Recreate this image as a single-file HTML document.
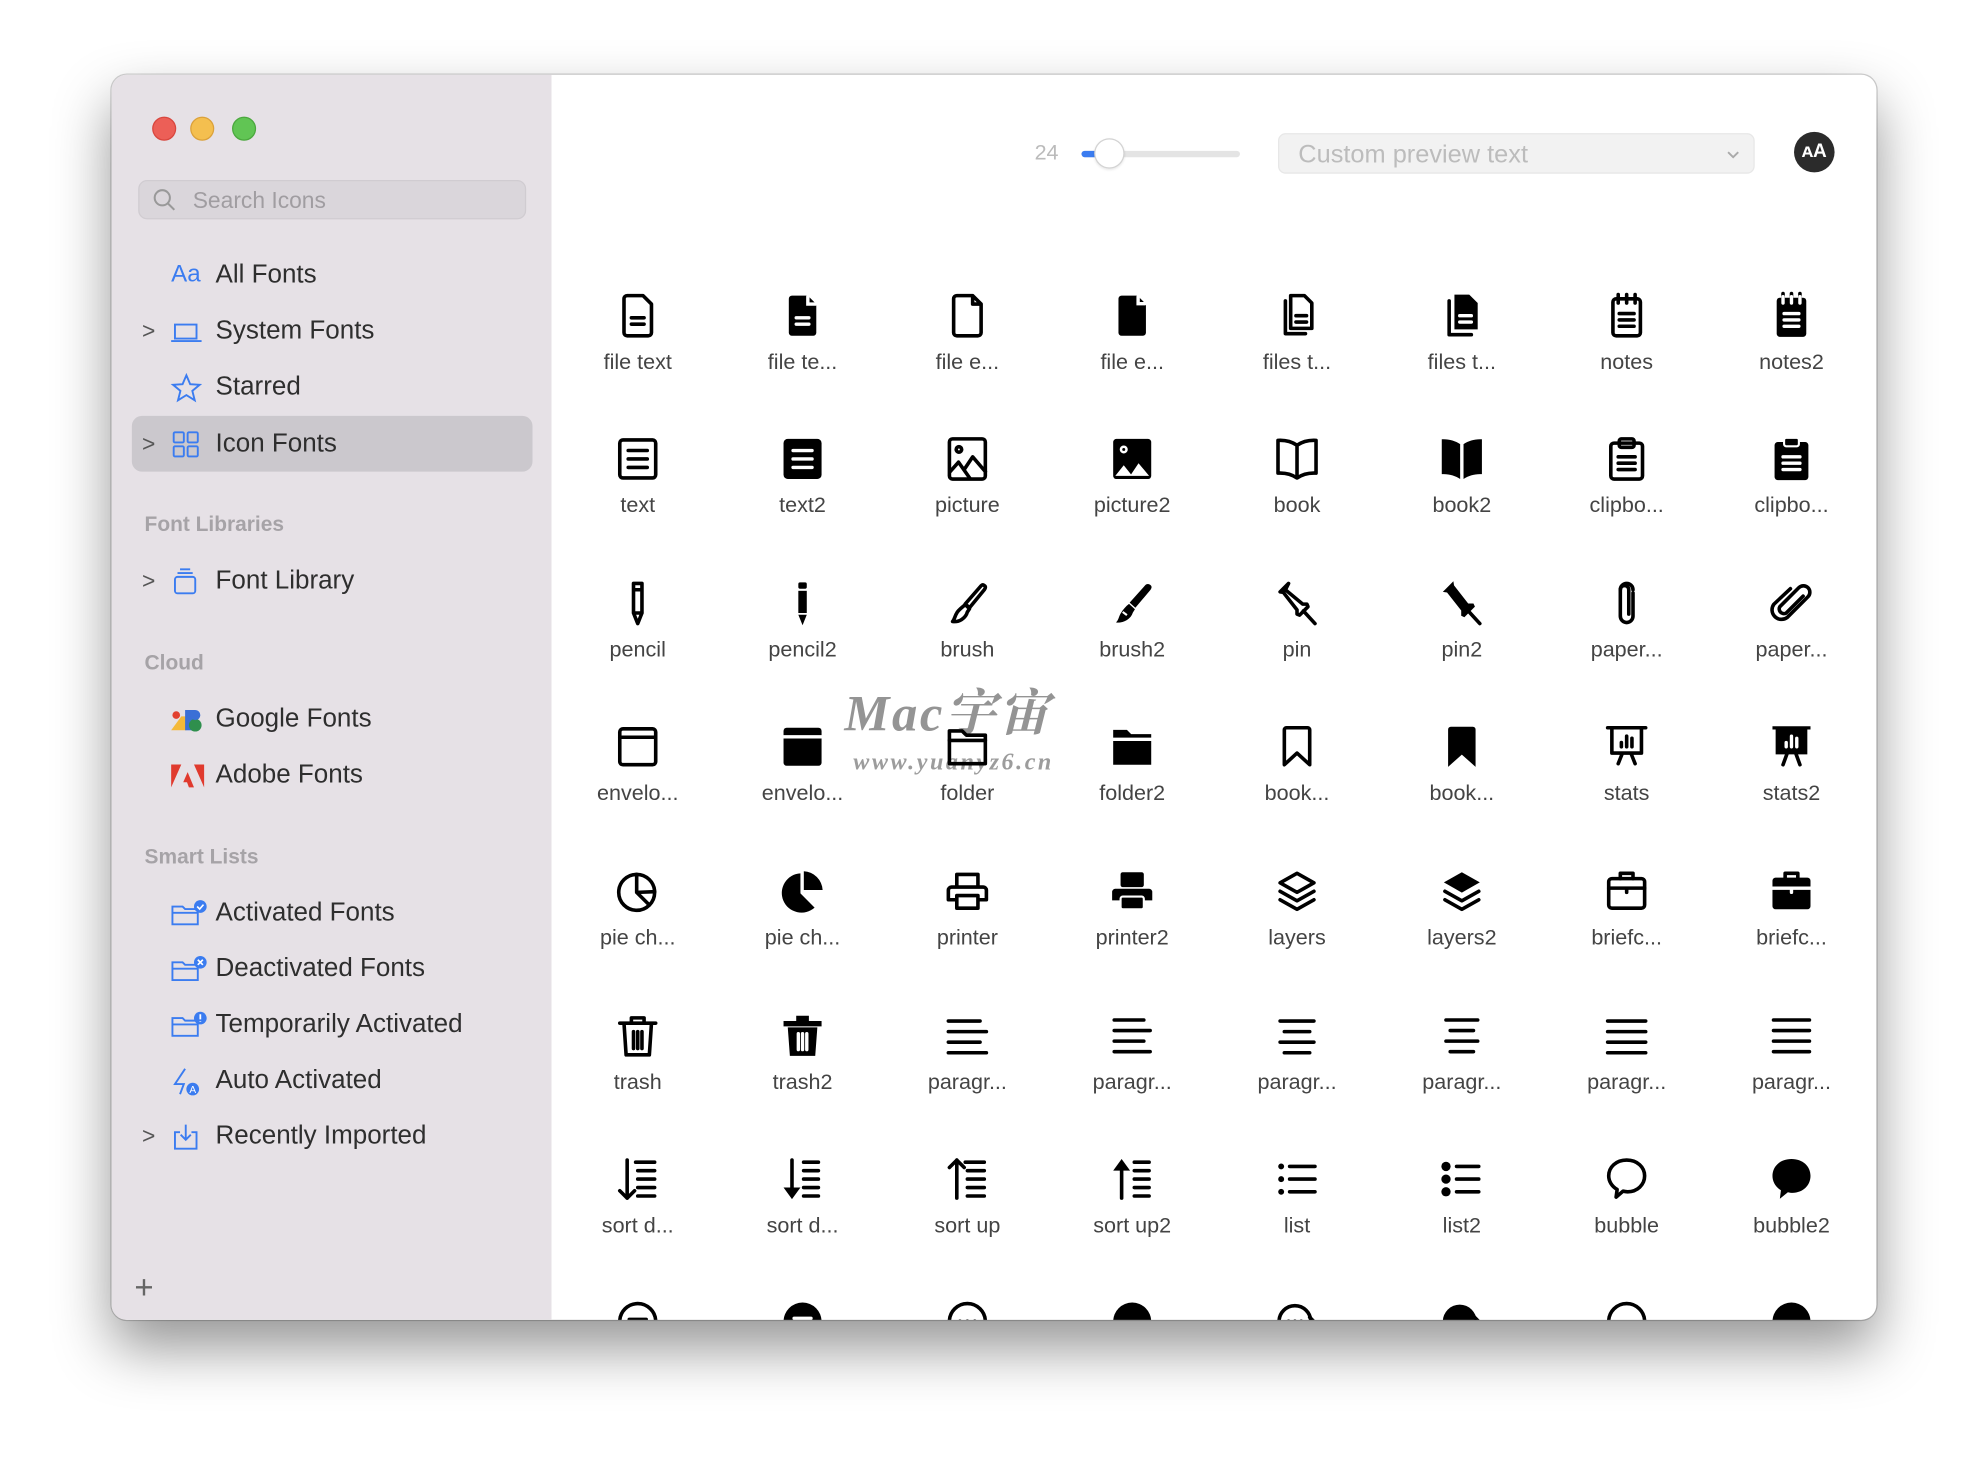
<!DOCTYPE html>
<html><head><meta charset="utf-8"><style>
*{margin:0;padding:0;box-sizing:border-box}
html,body{width:1988px;height:1468px;overflow:hidden;background:#fff;font-family:"Liberation Sans","Noto Sans CJK SC",sans-serif}
#w{position:absolute;left:0;top:0;width:1568px;height:1158px;transform:scale(1.267857);transform-origin:0 0}
.win{position:absolute;left:88px;top:59px;width:1392px;height:982px;border-radius:12px;overflow:hidden;background:#fff;box-shadow:0 22px 45px rgba(0,0,0,.42),0 0 0 1px rgba(0,0,0,.18)}
.side{position:absolute;left:0;top:0;width:347px;height:982px;background:#e6e1e6}
.dot{position:absolute;top:33px;width:19px;height:19px;border-radius:50%}
.search{position:absolute;left:21px;top:83px;width:306px;height:31px;border-radius:7px;background:#dad6db;border:1px solid #d0ccd1}
.search span{position:absolute;left:42px;top:5px;font-size:18px;color:#a09da1}
.it{position:absolute;left:0;font-size:20.5px;color:#2e2e2e;height:24px;line-height:24px}
.it .t{position:absolute;left:82px;white-space:nowrap}
.it .ch{position:absolute;left:24px;top:0;font-size:18px;color:#555}
.it svg{position:absolute;left:46px;top:1px}
.hd{position:absolute;left:26px;font-size:16.5px;font-weight:bold;color:#a6a3a7}
.cell{position:absolute;width:120px;text-align:center}
.cell svg{display:block;margin:0 auto;width:40px;height:40px}
.cell div{margin-top:7px;font-size:17px;line-height:20px;color:#444}
.o{fill:none;stroke:#000;stroke-width:1.7;stroke-linejoin:round;stroke-linecap:round}
.f{fill:#000}
.wl{fill:none;stroke:#fff;stroke-width:1.6;stroke-linecap:round}
</style></head><body><div id="w">
<div class="win">
<div class="side">
<div class="dot" style="left:32px;background:#ec5f57;border:1px solid #d8463e"></div>
<div class="dot" style="left:62px;background:#f4bf4f;border:1px solid #dba13a"></div>
<div class="dot" style="left:95px;background:#61c554;border:1px solid #4ba83e"></div>
<div class="search"><svg style="position:absolute;left:10px;top:5px" width="20" height="20" viewBox="0 0 20 20"><circle cx="8" cy="8" r="6" fill="none" stroke="#999" stroke-width="1.6"/><path d="M12.5 12.5l5 5" stroke="#999" stroke-width="1.6"/></svg><span>Search Icons</span></div>

<div class="it" style="top:146px"><span style="position:absolute;left:47px;color:#3b7cf0;font-size:19px">Aa</span><span class="t">All Fonts</span></div>
<div class="it" style="top:190px"><span class="ch">&gt;</span><svg width="26" height="24" viewBox="0 0 26 24"><path d="M4 6h17v11H4zM1 19h24" fill="none" stroke="#3b7cf0" stroke-width="1.5"/></svg><span class="t">System Fonts</span></div>
<div class="it" style="top:234px"><svg width="26" height="24" viewBox="0 0 26 24"><path d="M13 2l3 7 7.5.5-5.8 4.8 1.9 7.4L13 17.6l-6.6 4.1 1.9-7.4L2.5 9.5 10 9z" fill="none" stroke="#3b7cf0" stroke-width="1.5"/></svg><span class="t">Starred</span></div>
<div style="position:absolute;left:16px;top:269px;width:316px;height:44px;border-radius:8px;background:#cbc8cd"></div>
<div class="it" style="top:279px"><span class="ch">&gt;</span><svg width="26" height="24" viewBox="0 0 26 24"><g fill="none" stroke="#3b7cf0" stroke-width="1.5"><rect x="3" y="2" width="8" height="8" rx="1"/><rect x="14" y="2" width="8" height="8" rx="1"/><rect x="3" y="13" width="8" height="8" rx="1"/><rect x="14" y="13" width="8" height="8" rx="1"/></g></svg><span class="t">Icon Fonts</span></div>

<div class="hd" style="top:346px">Font Libraries</div>
<div class="it" style="top:387px"><span class="ch">&gt;</span><svg width="26" height="24" viewBox="0 0 26 24"><g fill="none" stroke="#3b7cf0" stroke-width="1.5"><rect x="4" y="8" width="16" height="13" rx="2"/><path d="M6 5h12M8 2h8"/></g></svg><span class="t">Font Library</span></div>

<div class="hd" style="top:455px">Cloud</div>
<div class="it" style="top:496px"><svg width="28" height="24" viewBox="0 0 28 24"><path d="M1 20l8-11h4v11z" fill="#f4b93a"/><circle cx="5" cy="8" r="3" fill="#e2402f"/><rect x="12" y="4" width="8" height="16" fill="#3b6fd6"/><circle cx="20" cy="16" r="5" fill="#2f8f4d"/><circle cx="20" cy="8" r="4" fill="#3b6fd6"/></svg><span class="t">Google Fonts</span></div>
<div class="it" style="top:540px"><svg width="28" height="24" viewBox="0 0 28 24"><path d="M1 3h8L1 21zM19 3h8v18zM14 9l5 12h-4l-1.5-4h-3z" fill="#e03a2e"/></svg><span class="t">Adobe Fonts</span></div>

<div class="hd" style="top:608px">Smart Lists</div>
<div class="it" style="top:649px"><svg width="30" height="24" viewBox="0 0 30 24"><path d="M2 6h8l2 2h10v12H2z" fill="none" stroke="#3b7cf0" stroke-width="1.5"/><path d="M2 11h20" stroke="#3b7cf0" stroke-width="1.5"/><circle cx="24" cy="6" r="5" fill="#3b7cf0"/><path d="M21.5 6l2 2 3-3.5" fill="none" stroke="#fff" stroke-width="1.3"/></svg><span class="t">Activated Fonts</span></div>
<div class="it" style="top:693px"><svg width="30" height="24" viewBox="0 0 30 24"><path d="M2 6h8l2 2h10v12H2z" fill="none" stroke="#3b7cf0" stroke-width="1.5"/><path d="M2 11h20" stroke="#3b7cf0" stroke-width="1.5"/><circle cx="24" cy="6" r="5" fill="#3b7cf0"/><path d="M22 4l4 4M26 4l-4 4" stroke="#fff" stroke-width="1.3"/></svg><span class="t">Deactivated Fonts</span></div>
<div class="it" style="top:737px"><svg width="30" height="24" viewBox="0 0 30 24"><path d="M2 6h8l2 2h10v12H2z" fill="none" stroke="#3b7cf0" stroke-width="1.5"/><path d="M2 11h20" stroke="#3b7cf0" stroke-width="1.5"/><circle cx="24" cy="6" r="5" fill="#3b7cf0"/><path d="M24 3v4M24 8.5v.5" stroke="#fff" stroke-width="1.4"/></svg><span class="t">Temporarily Activated</span></div>
<div class="it" style="top:781px"><svg width="30" height="24" viewBox="0 0 30 24"><path d="M12 2L4 14h7l-3 8" fill="none" stroke="#3b7cf0" stroke-width="1.5"/><circle cx="18" cy="18" r="5" fill="#3b7cf0"/><text x="18" y="21" font-size="8" fill="#fff" text-anchor="middle" font-family="Liberation Sans">A</text></svg><span class="t">Auto Activated</span></div>
<div class="it" style="top:825px"><span class="ch">&gt;</span><svg width="26" height="24" viewBox="0 0 26 24"><path d="M8 8H4v13h17V8h-4M12.5 2v12M8.5 10l4 4 4-4" fill="none" stroke="#3b7cf0" stroke-width="1.5"/></svg><span class="t">Recently Imported</span></div>
<div style="position:absolute;left:18px;top:941px;font-size:26px;color:#666;font-weight:300">+</div>
</div>

<!-- toolbar -->
<div style="position:absolute;left:728px;top:52px;font-size:17px;color:#bbb">24</div>
<div style="position:absolute;left:765px;top:60px;width:125px;height:5px;border-radius:3px;background:#e4e4e4"></div>
<div style="position:absolute;left:765px;top:60px;width:14px;height:5px;border-radius:3px;background:#3b7cf0"></div>
<div style="position:absolute;left:775px;top:50px;width:24px;height:24px;border-radius:50%;background:#fff;border:1px solid #d3d3d3;box-shadow:0 1px 2px rgba(0,0,0,.1)"></div>
<div style="position:absolute;left:920px;top:46px;width:376px;height:32px;border-radius:6px;background:#f2f2f2;border:1px solid #e7e7e7"><span style="position:absolute;left:15px;top:5px;font-size:20px;color:#bcbcbc">Custom preview text</span><svg style="position:absolute;right:10px;top:11px" width="12" height="10" viewBox="0 0 12 10"><path d="M2 3l4 4 4-4" fill="none" stroke="#aaa" stroke-width="1.5"/></svg></div>
<div style="position:absolute;left:1327px;top:45px;width:32px;height:32px;border-radius:50%;background:#2b2b2b;color:#fff;font-size:15px;font-weight:bold;text-align:center;line-height:32px">ᴀA</div>

<!-- watermark -->
<div style="position:absolute;left:578px;top:472px;font-size:40px;font-style:italic;font-weight:bold;color:rgba(90,90,90,.65);font-family:'Liberation Serif','Noto Serif CJK SC',serif;letter-spacing:2px">Mac宇宙</div>
<div style="position:absolute;left:585px;top:532px;font-size:19px;font-style:italic;font-weight:bold;color:rgba(90,90,90,.6);font-family:'Liberation Serif',serif;letter-spacing:2px">www.yuanyz6.cn</div>
</div>

<!-- grid (page coords) -->
<div style="position:absolute;left:0;top:0;width:1568px;height:1041px;overflow:hidden">
<div class="cell" style="left:443px;top:229px"><svg viewBox="0 0 24 24"><path class="o" d="M7 2.5h7.5l4 4V20a1.5 1.5 0 0 1-1.5 1.5H7A1.5 1.5 0 0 1 5.5 20V4A1.5 1.5 0 0 1 7 2.5z"/><path class="o" d="M9 13h6M9 16h6"/></svg><div>file text</div></div>
<div class="cell" style="left:573px;top:229px"><svg viewBox="0 0 24 24"><path class="f" d="M7 2.5h7.5l4 4V20a1.5 1.5 0 0 1-1.5 1.5H7A1.5 1.5 0 0 1 5.5 20V4A1.5 1.5 0 0 1 7 2.5z"/><path class="wl" d="M9 13h6M9 16h6M14.5 3v3.5H18"/></svg><div>file te...</div></div>
<div class="cell" style="left:703px;top:229px"><svg viewBox="0 0 24 24"><path class="o" d="M7 2.5h7.5l4 4V20a1.5 1.5 0 0 1-1.5 1.5H7A1.5 1.5 0 0 1 5.5 20V4A1.5 1.5 0 0 1 7 2.5zM14.5 2.5v4h4"/></svg><div>file e...</div></div>
<div class="cell" style="left:833px;top:229px"><svg viewBox="0 0 24 24"><path class="f" d="M7 2.5h7.5l4 4V20a1.5 1.5 0 0 1-1.5 1.5H7A1.5 1.5 0 0 1 5.5 20V4A1.5 1.5 0 0 1 7 2.5z"/><path class="wl" d="M14.8 3v3.3H18"/></svg><div>file e...</div></div>
<div class="cell" style="left:963px;top:229px"><svg viewBox="0 0 24 24"><path class="o" d="M9 2.5h6.5l3.5 3.5v12H9zM6.5 5v15.5H16"/><path class="o" d="M11.5 12h5M11.5 15h5"/></svg><div>files t...</div></div>
<div class="cell" style="left:1093px;top:229px"><svg viewBox="0 0 24 24"><path class="f" d="M8.5 2h7l4 4v12.5h-11z"/><path class="o" d="M6 5v16h10.5"/><path class="wl" d="M11 12h5.5M11 15h5.5"/></svg><div>files t...</div></div>
<div class="cell" style="left:1223px;top:229px"><svg viewBox="0 0 24 24"><rect class="o" x="5.5" y="4" width="13" height="17.5" rx="1.5"/><path class="o" d="M8 2v4M12 2v4M16 2v4M8.5 11h7M8.5 14h7M8.5 17h7"/></svg><div>notes</div></div>
<div class="cell" style="left:1353px;top:229px"><svg viewBox="0 0 24 24"><rect class="f" x="5" y="3.5" width="14" height="18.5" rx="1.5"/><path class="o" d="M8 1.5v3M12 1.5v3M16 1.5v3"/><path class="wl" d="M8 3v3M12 3v3M16 3v3M8.5 11h7M8.5 14h7M8.5 17h7"/></svg><div>notes2</div></div>
<div class="cell" style="left:443px;top:342px"><svg viewBox="0 0 24 24"><rect class="o" x="3.5" y="3" width="17" height="18" rx="1.5"/><path class="o" d="M7.5 8h9M7.5 12h9M7.5 16h9" stroke-width="1.9"/></svg><div>text</div></div>
<div class="cell" style="left:573px;top:342px"><svg viewBox="0 0 24 24"><rect class="f" x="3" y="2.5" width="18" height="19" rx="2"/><path class="wl" d="M7.5 8h9M7.5 12h9M7.5 16h9"/></svg><div>text2</div></div>
<div class="cell" style="left:703px;top:342px"><svg viewBox="0 0 24 24"><rect class="o" x="3.5" y="2.5" width="17" height="19" rx="1.5"/><circle class="o" cx="8" cy="7.5" r="1.3"/><path class="o" d="M3.8 18l4-4.5 5.5 7.8M10.5 17l4-6 6 7"/></svg><div>picture</div></div>
<div class="cell" style="left:833px;top:342px"><svg viewBox="0 0 24 24"><rect class="f" x="3" y="2.5" width="18" height="19" rx="1.5"/><circle cx="8" cy="7.5" r="1.3" fill="none" stroke="#fff" stroke-width="1.2"/><path d="M4 20l4-5 4 5zM11 20l4-6 5 6z" fill="#fff"/></svg><div>picture2</div></div>
<div class="cell" style="left:963px;top:342px"><svg viewBox="0 0 24 24"><path class="o" d="M12 5.5C9.5 3.8 6.5 3 3 3.2v15.5c3.5-.2 6.5.6 9 2.3 2.5-1.7 5.5-2.5 9-2.3V3.2c-3.5-.2-6.5.6-9 2.3zM12 5.5V21"/></svg><div>book</div></div>
<div class="cell" style="left:1093px;top:342px"><svg viewBox="0 0 24 24"><path class="f" d="M11.2 5C8.7 3.3 5.7 2.5 2.5 2.7v16.5c3.2-.2 6.2.6 8.7 2.3zM12.8 5c2.5-1.7 5.5-2.5 8.7-2.3v16.5c-3.2-.2-6.2.6-8.7 2.3z"/></svg><div>book2</div></div>
<div class="cell" style="left:1223px;top:342px"><svg viewBox="0 0 24 24"><rect class="o" x="4.5" y="4.5" width="15" height="17" rx="1.5"/><rect class="o" x="8.5" y="2.5" width="7" height="4" rx="1"/><path class="o" d="M8 11h8M8 14h8M8 17h8"/></svg><div>clipbo...</div></div>
<div class="cell" style="left:1353px;top:342px"><svg viewBox="0 0 24 24"><rect class="f" x="4" y="4" width="16" height="18" rx="1.5"/><rect class="f" x="8.5" y="2" width="7" height="4" rx="1" stroke="#fff" stroke-width="1"/><path class="wl" d="M8 11h8M8 14h8M8 17h8"/></svg><div>clipbo...</div></div>
<div class="cell" style="left:443px;top:456px"><svg viewBox="0 0 24 24"><path class="o" d="M10 2.5h4v14h-4zM10 5.5h4M10 16.5l2 5 2-5"/></svg><div>pencil</div></div>
<div class="cell" style="left:573px;top:456px"><svg viewBox="0 0 24 24"><rect class="f" x="10" y="2" width="4" height="3" rx=".8"/><rect class="f" x="10" y="6" width="4" height="10.5"/><path class="f" d="M10 17.3h4l-2 5z"/></svg><div>pencil2</div></div>
<div class="cell" style="left:703px;top:456px"><svg viewBox="0 0 24 24"><path class="o" d="M20 3.5c.8.5.6 1.2 0 2L13 14l-2-1.8 7.5-8.6c.6-.6 1-.6 1.5-.1z"/><path class="o" d="M11 12.5l2 2-1 1.5c-.8 3-4 5-7 4.5 1-1 1-2.5 2-4 .8-1.5 2.4-2.5 4-4z"/></svg><div>brush</div></div>
<div class="cell" style="left:833px;top:456px"><svg viewBox="0 0 24 24"><path class="f" d="M20.8 3.4c.6.6.4 1.4-.2 2.2L13.5 14 10.8 11.6 18.2 3.3c.8-.8 1.8-.7 2.6.1z"/><path class="f" d="M10.5 12.2l2.8 2.5-1 1.6c-1 3.2-4.5 5-8 4.7 1.3-1.2 1.3-2.8 2.3-4.4 1-1.6 2.3-3.2 3.9-4.4z"/><path d="M7.5 16l2 1.5" stroke="#fff" stroke-width="1"/></svg><div>brush2</div></div>
<div class="cell" style="left:963px;top:456px"><svg viewBox="0 0 24 24"><path class="o" d="M8 2.5l-4 4 1.5.2 6.5 8.3v2l1.2 .5 4-4-.5-1.2h-2L6.5 5.5z"/><path class="o" d="M15 15.5l5.5 6"/></svg><div>pin</div></div>
<div class="cell" style="left:1093px;top:456px"><svg viewBox="0 0 24 24"><path class="f" d="M8 1.5L3 6.5l2 .3 6.7 8.5v2.5l1.5.7 5-5-.7-1.5h-2.5L8.3 3.4z"/><path class="o" d="M15 15.5l5.5 6"/></svg><div>pin2</div></div>
<div class="cell" style="left:1223px;top:456px"><svg viewBox="0 0 24 24"><path class="o" d="M15 7v11a3 3 0 0 1-6 0V5.5a2 2 0 0 1 4 0V17"/><path class="o" d="M9 5.5a3 3 0 0 1 6 0"/></svg><div>paper...</div></div>
<div class="cell" style="left:1353px;top:456px"><svg viewBox="0 0 24 24"><path class="o" d="M17.5 8.5l-8 8a2.2 2.2 0 0 1-3-3l9-9a3 3 0 0 1 4.3 4.3l-9.8 9.8a4.5 4.5 0 0 1-6.3-6.3L11.5 5"/></svg><div>paper...</div></div>
<div class="cell" style="left:443px;top:569px"><svg viewBox="0 0 24 24"><rect class="o" x="3.5" y="3.5" width="17" height="17" rx="1.5"/><path class="o" d="M3.5 7.5h17"/></svg><div>envelo...</div></div>
<div class="cell" style="left:573px;top:569px"><svg viewBox="0 0 24 24"><rect class="f" x="3" y="3" width="18" height="18" rx="1.5"/><path class="wl" d="M3 7.3h18" stroke-width="1.2"/></svg><div>envelo...</div></div>
<div class="cell" style="left:703px;top:569px"><svg viewBox="0 0 24 24"><path class="o" d="M3.5 4.5h6l2 2h9v13.5h-17z"/><path class="o" d="M3.5 9h17"/></svg><div>folder</div></div>
<div class="cell" style="left:833px;top:569px"><svg viewBox="0 0 24 24"><path class="f" d="M3 4h6.5l2 2H21v14.5H3z"/><path class="wl" d="M3 8.5h18" stroke-width="1.1"/></svg><div>folder2</div></div>
<div class="cell" style="left:963px;top:569px"><svg viewBox="0 0 24 24"><path class="o" d="M7 3h10a1 1 0 0 1 1 1v16.5l-6-5.5-6 5.5V4a1 1 0 0 1 1-1z"/></svg><div>book...</div></div>
<div class="cell" style="left:1093px;top:569px"><svg viewBox="0 0 24 24"><path class="f" d="M6.8 2.5h10.4a1.3 1.3 0 0 1 1.3 1.3V21.5l-6.5-5.8-6.5 5.8V3.8a1.3 1.3 0 0 1 1.3-1.3z"/></svg><div>book...</div></div>
<div class="cell" style="left:1223px;top:569px"><svg viewBox="0 0 24 24"><path class="o" d="M3 3h18M5 3.5v11.5h14V3.5M10 15l-2 5M14 15l2 5M9.5 12v-2M12 12V7M14.5 12V8"/></svg><div>stats</div></div>
<div class="cell" style="left:1353px;top:569px"><svg viewBox="0 0 24 24"><path class="f" d="M3 2.3h18v1.5h-1.5v11.8h-15V3.8H3z"/><path class="wl" d="M9.5 12v-2M12 12V7M14.5 12V8"/><path class="o" d="M10 15l-2 5.5M14 15l2 5.5"/></svg><div>stats2</div></div>
<div class="cell" style="left:443px;top:683px"><svg viewBox="0 0 24 24"><circle class="o" cx="11.5" cy="12.5" r="8.5"/><path class="o" d="M11.5 4v8.5l6 6M11.5 12.5l8.5-.3"/></svg><div>pie ch...</div></div>
<div class="cell" style="left:573px;top:683px"><svg viewBox="0 0 24 24"><path class="f" d="M11 3.5v9.5l6.7 6.7A9.3 9.3 0 1 1 11 3.5zM12.6 2.5A9.4 9.4 0 0 1 21.5 11.4h-8.9z"/></svg><div>pie ch...</div></div>
<div class="cell" style="left:703px;top:683px"><svg viewBox="0 0 24 24"><path class="o" d="M7 10V4h10v6M4.5 10h15a1.5 1.5 0 0 1 1.5 1.5V16h-4M7 16H3v-4.5A1.5 1.5 0 0 1 4.5 10M7 14h10v6H7z"/></svg><div>printer</div></div>
<div class="cell" style="left:833px;top:683px"><svg viewBox="0 0 24 24"><rect class="f" x="6.5" y="3" width="11" height="7" rx="1"/><path class="f" d="M4 10.8h16a1.5 1.5 0 0 1 1.5 1.5v4H2.5v-4A1.5 1.5 0 0 1 4 10.8z"/><rect class="f" x="6.5" y="14.5" width="11" height="6" rx="1" stroke="#fff" stroke-width="1"/></svg><div>printer2</div></div>
<div class="cell" style="left:963px;top:683px"><svg viewBox="0 0 24 24"><path class="o" d="M12 3.5l8 4.5-8 4.5-8-4.5z"/><path class="o" d="M4 12l8 4.5 8-4.5M4 16l8 4.5 8-4.5" stroke-width="2"/></svg><div>layers</div></div>
<div class="cell" style="left:1093px;top:683px"><svg viewBox="0 0 24 24"><path class="f" d="M12 3l8.5 4.8L12 12.6 3.5 7.8z"/><path class="o" d="M4 12l8 4.5 8-4.5M4 16l8 4.5 8-4.5"/></svg><div>layers2</div></div>
<div class="cell" style="left:1223px;top:683px"><svg viewBox="0 0 24 24"><rect class="o" x="3.5" y="6" width="17" height="14" rx="1.5"/><path class="o" d="M9 6V3.5h6V6M3.5 10.5h17M12 10.5v2"/></svg><div>briefc...</div></div>
<div class="cell" style="left:1353px;top:683px"><svg viewBox="0 0 24 24"><rect class="f" x="3" y="5.5" width="18" height="15" rx="1.5"/><path class="o" d="M9 6V3.5h6V6"/><path class="wl" d="M3 10.5h18M12 10.5v2" stroke-width="1.2"/></svg><div>briefc...</div></div>
<div class="cell" style="left:443px;top:797px"><svg viewBox="0 0 24 24"><path class="o" d="M3.5 6h17M9 6V3.5h6V6M5.5 6l1 15h11l1-15M10 10v8M12 10v8M14 10v8"/></svg><div>trash</div></div>
<div class="cell" style="left:573px;top:797px"><svg viewBox="0 0 24 24"><path class="f" d="M3 5h18v2.5H3zM9 2.5h6v3H9zM5 8h14l-1 13.5H6z"/><path class="wl" d="M10 11v7.5M12 11v7.5M14 11v7.5" stroke-width="1.2"/></svg><div>trash2</div></div>
<div class="cell" style="left:703px;top:797px"><svg viewBox="0 0 24 24"><path class="o" d="M3 5h15M3 10h18M3 15h15M3 20h18" stroke-width="1.3"/></svg><div>paragr...</div></div>
<div class="cell" style="left:833px;top:797px"><svg viewBox="0 0 24 24"><path class="o" d="M3.5 4.5h14M3.5 9.5h17M3.5 14.5h14M3.5 19.5h17" stroke-width="3.2"/></svg><div>paragr...</div></div>
<div class="cell" style="left:963px;top:797px"><svg viewBox="0 0 24 24"><path class="o" d="M4 5h16M6 10h12M4 15h16M6 20h12" stroke-width="1.3"/></svg><div>paragr...</div></div>
<div class="cell" style="left:1093px;top:797px"><svg viewBox="0 0 24 24"><path class="o" d="M4.5 4.5h15M6.5 9.5h11M4.5 14.5h15M6.5 19.5h11" stroke-width="3.2"/></svg><div>paragr...</div></div>
<div class="cell" style="left:1223px;top:797px"><svg viewBox="0 0 24 24"><path class="o" d="M3 5h18M3 10h18M3 15h18M3 20h18" stroke-width="1.3"/></svg><div>paragr...</div></div>
<div class="cell" style="left:1353px;top:797px"><svg viewBox="0 0 24 24"><path class="o" d="M3.5 4.5h17M3.5 9.5h17M3.5 14.5h17M3.5 19.5h17" stroke-width="3.2"/></svg><div>paragr...</div></div>
<div class="cell" style="left:443px;top:910px"><svg viewBox="0 0 24 24"><path class="o" d="M7 3v18M3.5 17.5L7 21l3.5-3.5M11 4h9M12 8h8M12 12h8M12 16h8M12 20h8" stroke-width="1.6"/></svg><div>sort d...</div></div>
<div class="cell" style="left:573px;top:910px"><svg viewBox="0 0 24 24"><path class="o" d="M7 3v15" stroke-width="2"/><path class="f" d="M3 16h8l-4 5.5z"/><path class="o" d="M12.5 4h7M12.5 8h7M12.5 12h7M12.5 16h7M12.5 20h7" stroke-width="3"/></svg><div>sort d...</div></div>
<div class="cell" style="left:703px;top:910px"><svg viewBox="0 0 24 24"><path class="o" d="M7 3v18M3.5 6.5L7 3l3.5 3.5M11 4h9M12 8h8M12 12h8M12 16h8M12 20h8" stroke-width="1.6"/></svg><div>sort up</div></div>
<div class="cell" style="left:833px;top:910px"><svg viewBox="0 0 24 24"><path class="o" d="M7 6v15" stroke-width="2"/><path class="f" d="M3 8h8L7 2.5z"/><path class="o" d="M13 4h7M13 8h7M13 12h7M13 16h7M13 20h7" stroke-width="3"/></svg><div>sort up2</div></div>
<div class="cell" style="left:963px;top:910px"><svg viewBox="0 0 24 24"><circle class="f" cx="4.5" cy="6" r="1.4"/><circle class="f" cx="4.5" cy="12" r="1.4"/><circle class="f" cx="4.5" cy="18" r="1.4"/><path class="o" d="M8.5 6h12M8.5 12h12M8.5 18h12" stroke-width="1.6"/></svg><div>list</div></div>
<div class="cell" style="left:1093px;top:910px"><svg viewBox="0 0 24 24"><circle class="f" cx="4.5" cy="6" r="2.2"/><circle class="f" cx="4.5" cy="12" r="2.2"/><circle class="f" cx="4.5" cy="18" r="2.2"/><path class="o" d="M9.5 6h10.5M9.5 12h10.5M9.5 18h10.5" stroke-width="3.2"/></svg><div>list2</div></div>
<div class="cell" style="left:1223px;top:910px"><svg viewBox="0 0 24 24"><path class="o" d="M12 3c5 0 8.5 3.3 8.5 7.5S17 18 12.5 18c-.7 0-1.5-.1-2.2-.3L7 20.5l.5-3.6C5 15.5 3.5 13 3.5 10.5 3.5 6.3 7 3 12 3z"/></svg><div>bubble</div></div>
<div class="cell" style="left:1353px;top:910px"><svg viewBox="0 0 24 24"><path class="f" d="M12 2.5c5.3 0 9 3.4 9 8s-3.7 8-8.5 8c-.7 0-1.5-.1-2.2-.3L6.5 21.3l.5-4C4.5 15.8 3 13.3 3 10.5c0-4.6 3.7-8 9-8z"/></svg><div>bubble2</div></div>
<div class="cell" style="left:443px;top:1024px"><svg viewBox="0 0 24 24"><circle class="o" cx="12" cy="11" r="8.5"/><path class="o" d="M8 10h8"/></svg></div>
<div class="cell" style="left:573px;top:1024px"><svg viewBox="0 0 24 24"><circle class="f" cx="12" cy="11" r="9"/><path class="wl" d="M8 9.5h8"/></svg></div>
<div class="cell" style="left:703px;top:1024px"><svg viewBox="0 0 24 24"><circle class="o" cx="12" cy="11" r="8.5"/><circle class="f" cx="8.5" cy="11" r="1"/><circle class="f" cx="12" cy="11" r="1"/><circle class="f" cx="15.5" cy="11" r="1"/></svg></div>
<div class="cell" style="left:833px;top:1024px"><svg viewBox="0 0 24 24"><circle class="f" cx="12" cy="11" r="9"/></svg></div>
<div class="cell" style="left:963px;top:1024px"><svg viewBox="0 0 24 24"><circle class="o" cx="11" cy="11" r="7.5"/><path class="o" d="M18 9l3 3"/><circle class="f" cx="8" cy="11" r="1"/><circle class="f" cx="11" cy="11" r="1"/><circle class="f" cx="14" cy="11" r="1"/></svg></div>
<div class="cell" style="left:1093px;top:1024px"><svg viewBox="0 0 24 24"><circle class="f" cx="11" cy="11" r="8"/><path class="o" d="M18 9l3 3"/></svg></div>
<div class="cell" style="left:1223px;top:1024px"><svg viewBox="0 0 24 24"><circle class="o" cx="12" cy="11" r="8.5"/></svg></div>
<div class="cell" style="left:1353px;top:1024px"><svg viewBox="0 0 24 24"><circle class="f" cx="12" cy="11" r="9"/></svg></div>
</div>
</div></body></html>
